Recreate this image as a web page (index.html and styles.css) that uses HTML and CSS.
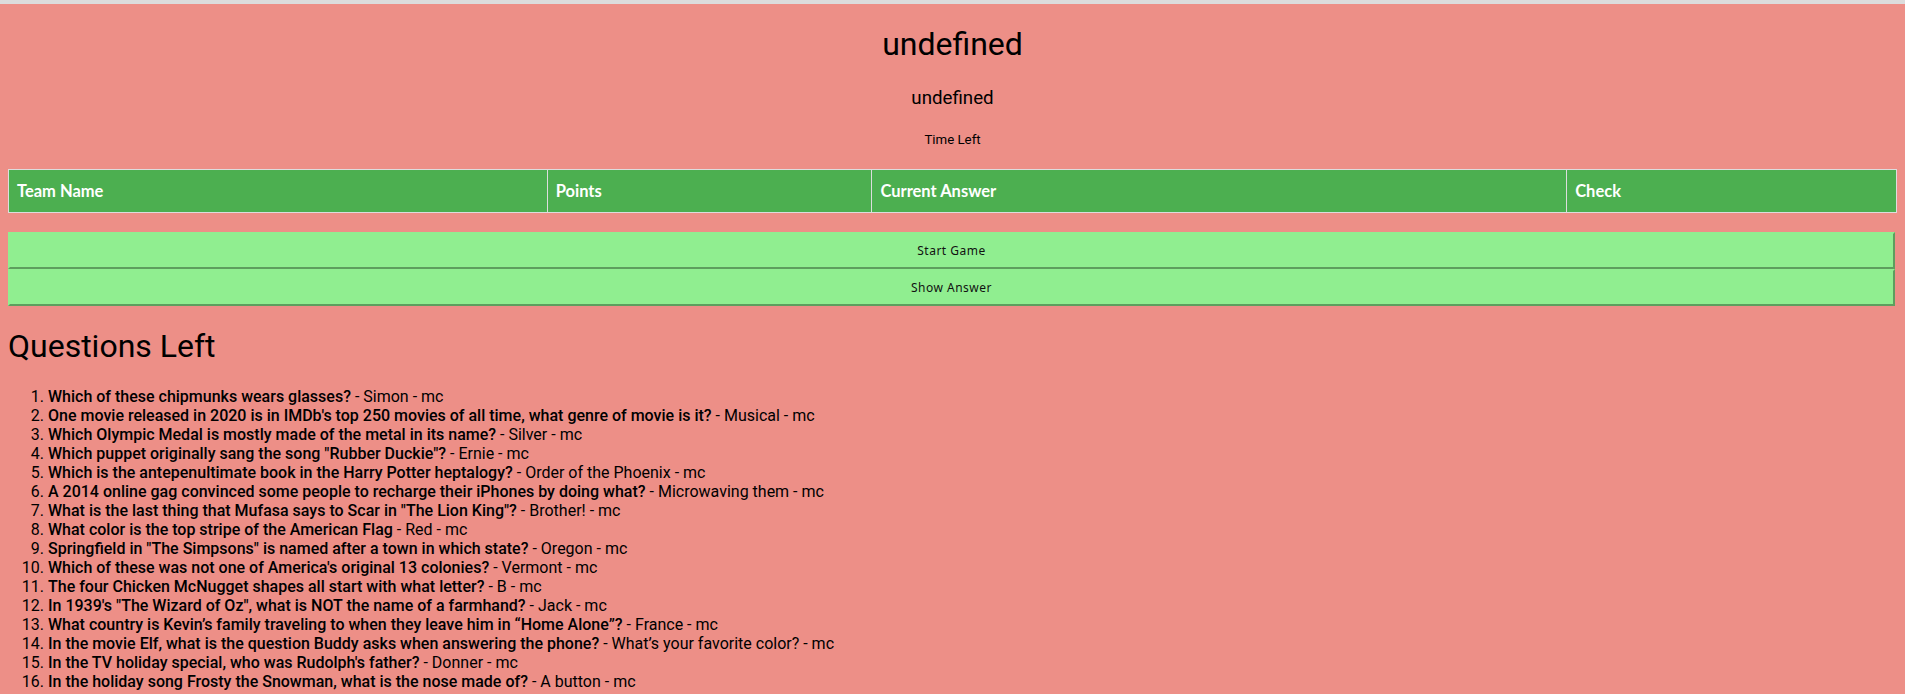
FILE: index.html
```html
<!DOCTYPE html>
<html>
<head>
<meta charset="utf-8">
<title>Trivia Host</title>
<link rel="stylesheet" href="styles.css">
</head>
<body>
<h1 class="title">undefined</h1>
<h3 class="subtitle">undefined</h3>
<h5 class="timer">Time Left</h5>
<table class="teams">
  <thead>
    <tr>
      <th class="col-team">Team Name</th>
      <th class="col-points">Points</th>
      <th class="col-answer">Current Answer</th>
      <th class="col-check">Check</th>
    </tr>
  </thead>
</table>
<div class="controls">
  <button class="ctrl">Start Game</button>
  <button class="ctrl">Show Answer</button>
</div>
<h1 class="section">Questions Left</h1>
<ol class="questions">
  <li><span class="q">Which of these chipmunks wears glasses?</span> - Simon - mc</li>
  <li><span class="q">One movie released in 2020 is in IMDb's top 250 movies of all time, what genre of movie is it?</span> - Musical - mc</li>
  <li><span class="q">Which Olympic Medal is mostly made of the metal in its name?</span> - Silver - mc</li>
  <li><span class="q">Which puppet originally sang the song "Rubber Duckie"?</span> - Ernie - mc</li>
  <li><span class="q">Which is the antepenultimate book in the Harry Potter heptalogy?</span> - Order of the Phoenix - mc</li>
  <li><span class="q">A 2014 online gag convinced some people to recharge their iPhones by doing what?</span> - Microwaving them - mc</li>
  <li><span class="q">What is the last thing that Mufasa says to Scar in "The Lion King"?</span> - Brother! - mc</li>
  <li><span class="q">What color is the top stripe of the American Flag</span> - Red - mc</li>
  <li><span class="q">Springfield in "The Simpsons" is named after a town in which state?</span> - Oregon - mc</li>
  <li><span class="q">Which of these was not one of America's original 13 colonies?</span> - Vermont - mc</li>
  <li><span class="q">The four Chicken McNugget shapes all start with what letter?</span> - B - mc</li>
  <li><span class="q">In 1939's "The Wizard of Oz", what is NOT the name of a farmhand?</span> - Jack - mc</li>
  <li><span class="q">What country is Kevin’s family traveling to when they leave him in “Home Alone”?</span> - France - mc</li>
  <li><span class="q">In the movie Elf, what is the question Buddy asks when answering the phone?</span> - What’s your favorite color? - mc</li>
  <li><span class="q">In the TV holiday special, who was Rudolph's father?</span> - Donner - mc</li>
  <li><span class="q">In the holiday song Frosty the Snowman, what is the nose made of?</span> - A button - mc</li>
  <li><span class="q">In the movie Home Alone, what is the name of the hotel the family stays at?</span> - The Plaza - mc</li>
</ol>
</body>
</html>
```

FILE: styles.css
```css
html {
  border-top: 4px solid #dcdcdc;
  background: #ed8f87;
}

body {
  margin: 8px;
  font-family: Roboto, "Liberation Sans", sans-serif;
  color: #000;
  background: #ed8f87;
}

.title {
  text-align: center;
  font-size: 32px;
  font-weight: 400;
  margin: 13.5px 0 0;
  line-height: 37.5px;
}

.subtitle {
  text-align: center;
  font-size: 18.72px;
  font-weight: 400;
  margin: 23.7px 0 0;
  line-height: 22px;
}

.timer {
  text-align: center;
  font-size: 13.28px;
  font-weight: 400;
  margin: 23px 0 0;
  line-height: 15.5px;
}

.teams {
  margin-top: 21.7px;
  width: 100%;
  table-layout: fixed;
  border-collapse: collapse;
  font-family: Lato, "Liberation Sans", sans-serif;
}

.teams th {
  box-sizing: border-box;
  border: 1px solid #dddddd;
  padding: 12px 8px;
  line-height: 18px;
  font-size: 16.5px;
  font-weight: 700;
  text-align: left;
  background-color: #4caf50;
  color: #fff;
}

.col-team { width: 28.53%; }
.col-points { width: 17.2%; }
.col-answer { width: 36.8%; }
.col-check { width: 17.47%; }

.controls {
  margin-top: 19px;
  display: flex;
  flex-direction: column;
  padding-right: 2px;
}

.ctrl {
  display: block;
  width: 100%;
  height: 37px;
  margin: 0;
  padding: 0;
  background: #90ee90;
  border-style: solid;
  border-width: 2px;
  border-color: #90ee90 #5e9e5e #5e9e5e #90ee90;
  font-family: "Noto Sans", "DejaVu Sans", sans-serif;
  font-size: 12px;
  letter-spacing: 0.5px;
  color: #111;
}

.section {
  font-size: 32px;
  font-weight: 400;
  line-height: 37.5px;
  margin: 22px 0 21.44px;
}

.questions {
  margin: 0;
  padding-left: 40px;
  font-size: 16px;
  line-height: 19px;
}

.q {
  font-weight: 500;
}
```
